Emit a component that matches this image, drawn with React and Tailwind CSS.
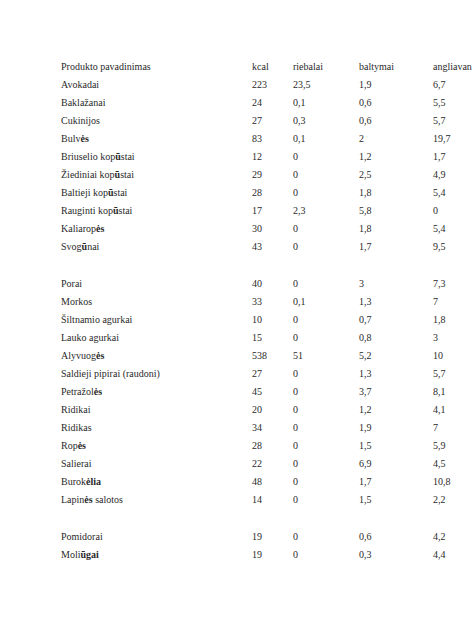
const rows = [
  ['Produkto pavadinimas', 'kcal', 'riebalai', 'baltymai', 'angliavan'],
  ['Avokadai', '223', '23,5', '1,9', '6,7'],
  ['Baklažanai', '24', '0,1', '0,6', '5,5'],
  ['Cukinijos', '27', '0,3', '0,6', '5,7'],
  [['Bulv', 'ės'], '83', '0,1', '2', '19,7'],
  [['Briuselio kop', 'ū', 'stai'], '12', '0', '1,2', '1,7'],
  [['Žiediniai kop', 'ū', 'stai'], '29', '0', '2,5', '4,9'],
  [['Baltieji kop', 'ū', 'stai'], '28', '0', '1,8', '5,4'],
  [['Rauginti kop', 'ū', 'stai'], '17', '2,3', '5,8', '0'],
  [['Kaliarop', 'ės'], '30', '0', '1,8', '5,4'],
  [['Svog', 'ū', 'nai'], '43', '0', '1,7', '9,5'],
  null,
  ['Porai', '40', '0', '3', '7,3'],
  ['Morkos', '33', '0,1', '1,3', '7'],
  ['Šiltnamio agurkai', '10', '0', '0,7', '1,8'],
  ['Lauko agurkai', '15', '0', '0,8', '3'],
  [['Alyvuog', 'ės'], '538', '51', '5,2', '10'],
  ['Saldieji pipirai (raudoni)', '27', '0', '1,3', '5,7'],
  [['Petražol', 'ės'], '45', '0', '3,7', '8,1'],
  ['Ridikai', '20', '0', '1,2', '4,1'],
  ['Ridikas', '34', '0', '1,9', '7'],
  [['Rop', 'ės'], '28', '0', '1,5', '5,9'],
  ['Salierai', '22', '0', '6,9', '4,5'],
  [['Burok', 'ėlia'], '48', '0', '1,7', '10,8'],
  [['Lapin', 'ės', ' salotos'], '14', '0', '1,5', '2,2'],
  null,
  ['Pomidorai', '19', '0', '0,6', '4,2'],
  [['Moli', 'ūgai'], '19', '0', '0,3', '4,4'],
];

function Name({ value }) {
  if (typeof value === 'string') return value;
  // odd segments are the Lithuanian letters that came out heavier in the scan
  return value.map((part, i) =>
    i % 2 === 1 ? (
      <span key={i} className="font-bold">
        {part}
      </span>
    ) : (
      <span key={i}>{part}</span>
    )
  );
}

export default function App() {
  return (
    <div className="w-[474px] h-[632px] overflow-hidden bg-white pt-[58px] pl-[61px] text-[10px] leading-[18px] text-[#2a2a2a] [font-family:'Liberation_Serif','Times_New_Roman',serif]">
      {rows.map((row, i) =>
        row === null ? (
          <div key={i} className="h-[19px]" />
        ) : (
          <div key={i} className="grid grid-cols-[191px_41px_66px_74px_1fr] h-[18px] whitespace-nowrap">
            <div>
              <Name value={row[0]} />
            </div>
            <div>{row[1]}</div>
            <div>{row[2]}</div>
            <div>{row[3]}</div>
            <div>{row[4]}</div>
          </div>
        )
      )}
    </div>
  );
}
